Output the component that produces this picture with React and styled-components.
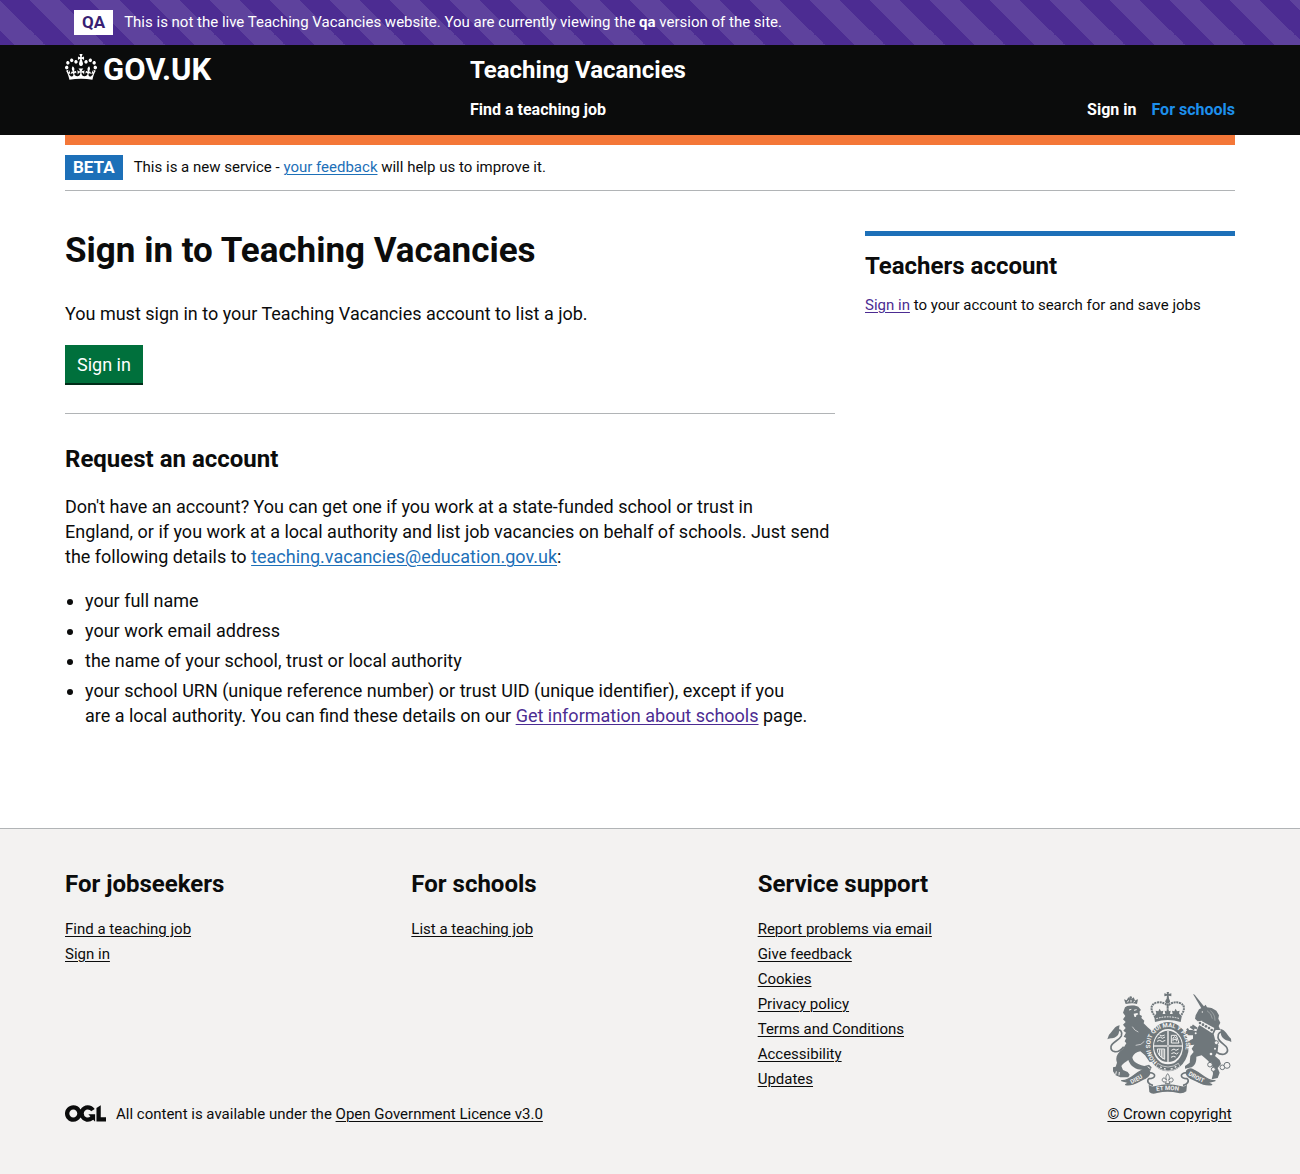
import React from 'react';
import styled, { createGlobalStyle } from 'styled-components';

const ink = '#0b0c0c';
const purple = '#4c2c92';
const blue = '#1d70b8';
const rule = '#b1b4b6';
const crestGrey = '#6f777b';
const paper = '#f3f2f1';

const GlobalStyle = createGlobalStyle`
  *, *::before, *::after { box-sizing: border-box; }
  body {
    margin: 0;
    background: #fff;
    color: ${ink};
    font-family: Roboto, "Liberation Sans", Arial, sans-serif;
    font-size: 18px;
    line-height: 25px;
  }
  h1, h2, p, ul { margin: 0; padding: 0; }
`;

const Container = styled.div`
  max-width: 1170px;
  margin: 0 auto;
  @media (max-width: 1230px) { margin: 0 30px; }
`;

const Link = styled.a`
  color: ${(p) => (p.$tone === 'visited' ? purple : p.$tone === 'plain' ? ink : blue)};
  text-decoration: underline;
  text-decoration-thickness: 1px;
  text-underline-offset: 2px;
  &:hover { text-decoration-thickness: 3px; }
`;

const Heading = styled.h2`
  font-size: 24px;
  line-height: 30px;
  font-weight: 700;
`;

const EnvironmentBar = styled.div`
  padding: 10px 0;
  background-color: ${purple};
  background-image: linear-gradient(
    45deg,
    rgba(255, 255, 255, 0.1) 25%,
    transparent 25%,
    transparent 50%,
    rgba(255, 255, 255, 0.1) 50%,
    rgba(255, 255, 255, 0.1) 75%,
    transparent 75%
  );
  background-position: 30px 0;
  background-size: 60px 60px;
  color: #fff;
`;

const Notice = styled.div`
  display: flex;
  align-items: center;
  gap: 11px;
  padding: 0 ${(p) => p.$inset || '0'};
  font-size: 15px;
`;

const Tag = styled.strong`
  flex: none;
  padding: 0 8px;
  background: ${(p) => (p.$inverse ? '#fff' : blue)};
  color: ${(p) => (p.$inverse ? '#381f73' : '#fff')};
  font-size: 17px;
  line-height: 25px;
`;

const Header = styled.header`
  background: ${ink};
  color: #fff;
`;

const HeaderGrid = styled.div`
  display: grid;
  grid-template-columns: 1fr 2fr;
  padding: 10px 0 13px;
`;

const HomeLink = styled.a`
  display: flex;
  align-items: center;
  align-self: start;
  gap: 6px;
  height: 30px;
  color: #fff;
  font-size: 31px;
  line-height: 30px;
  font-weight: 700;
  text-decoration: none;
`;

const CrownIcon = styled.svg`
  flex: none;
  width: 32px;
  height: 26px;
  margin-bottom: 6px;
  fill: currentColor;
`;

const HeaderContent = styled.div`
  padding-left: 15px;
`;

const ServiceName = styled.a`
  color: #fff;
  font-size: 24px;
  line-height: 30px;
  font-weight: 700;
  text-decoration: none;
`;

const HeaderNav = styled.nav`
  display: flex;
  gap: 15px;
  margin-top: 12px;
`;

const NavLink = styled.a`
  margin-right: ${(p) => (p.$first ? 'auto' : '0')};
  color: ${(p) => (p.$active ? '#1d8feb' : '#fff')};
  font-size: 16px;
  font-weight: 700;
  text-decoration: none;
`;

const PhaseBanner = styled.div`
  padding: 10px 0;
  border-top: 10px solid #f47738;
  border-bottom: 1px solid ${rule};
`;

const Columns = styled.div`
  display: grid;
  grid-template-columns: 2fr 1fr;
  margin: 0 -15px;
  padding: 40px 0 100px;
`;

const Main = styled.main`
  padding: 0 15px;
`;

const Title = styled.h1`
  margin-bottom: 30px;
  font-size: 35px;
  line-height: 40px;
`;

const Paragraph = styled.p`
  margin-bottom: 19px;
`;

const StartButton = styled.button`
  display: block;
  height: 38px;
  padding: 0 12px;
  border: 0;
  background: #00703c;
  box-shadow: 0 2px 0 #002d18;
  color: #fff;
  font: inherit;
  cursor: pointer;
`;

const Divider = styled.hr`
  margin: 30px 0;
  border: 0;
  border-top: 1px solid ${rule};
`;

const BulletList = styled.ul`
  display: grid;
  gap: 5px;
  padding-left: 20px;
`;

const SectionHeading = styled(Heading)`
  margin-bottom: 20px;
`;

const Aside = styled.aside`
  padding: 0 15px;
`;

const AccountPanel = styled.section`
  display: grid;
  gap: 12px;
  padding-top: 15px;
  border-top: 5px solid ${blue};
`;

const SmallText = styled.p`
  font-size: 15px;
`;

const Footer = styled.footer`
  padding: 40px 0 48px;
  border-top: 1px solid ${rule};
  background: ${paper};
  font-size: 15px;
`;

const FooterLayout = styled.div`
  display: flex;
  align-items: flex-end;
`;

const FooterMain = styled.div`
  flex: 1;
  display: grid;
  gap: 10px;
`;

const FooterNav = styled.nav`
  display: grid;
  grid-template-columns: repeat(3, 1fr);
`;

const LinkGroup = styled.div`
  display: grid;
  align-content: start;
  gap: 18px;
`;

const LinkList = styled.ul`
  list-style: none;
`;

const Licence = styled.div`
  display: flex;
  align-items: center;
  gap: 10px;
`;

const OglIcon = styled.svg`
  flex: none;
  width: 41px;
  height: 17px;
  margin-bottom: 3px;
`;

const Copyright = styled.a`
  display: grid;
  justify-items: center;
  gap: 8px;
  width: 131px;
  color: ${ink};
  text-underline-offset: 2px;
`;

const CrestIcon = styled.svg`
  width: 125px;
  height: 102px;
`;

function Crown() {
  return (
    <CrownIcon viewBox="0 0 132 97" preserveAspectRatio="none" aria-hidden="true">
      <path
        fillRule="evenodd"
        d="M25 30.2c3.5 1.5 7.7-.2 9.1-3.7 1.5-3.6-.2-7.8-3.9-9.2-3.6-1.4-7.6.3-9.1 3.9-1.4 3.5.3 7.5 3.9 9zM9 39.5c3.6 1.5 7.8-.2 9.2-3.7 1.5-3.6-.2-7.8-3.9-9.1-3.6-1.5-7.6.2-9.1 3.8-1.4 3.5.3 7.5 3.8 9zM4.4 57.2c3.5 1.5 7.7-.2 9.1-3.8 1.5-3.6-.2-7.7-3.9-9.1-3.5-1.5-7.6.3-9.1 3.8-1.4 3.5.3 7.6 3.9 9.1zm38.3-21.4c3.5 1.5 7.7-.2 9.1-3.8 1.5-3.6-.2-7.7-3.9-9.1-3.6-1.5-7.6.3-9.1 3.8-1.3 3.6.4 7.7 3.9 9.1zm64.4-5.6c-3.6 1.5-7.8-.2-9.1-3.7-1.5-3.6.2-7.8 3.8-9.2 3.6-1.4 7.7.3 9.2 3.9 1.3 3.5-.4 7.5-3.9 9zm15.9 9.3c-3.6 1.5-7.7-.2-9.1-3.7-1.5-3.6.2-7.8 3.7-9.1 3.6-1.5 7.7.2 9.2 3.8 1.5 3.5-.3 7.5-3.8 9zm4.7 17.7c-3.6 1.5-7.8-.2-9.2-3.8-1.5-3.6.2-7.7 3.9-9.1 3.6-1.5 7.7.3 9.2 3.8 1.3 3.5-.4 7.6-3.9 9.1zM89.3 35.8c-3.6 1.5-7.8-.2-9.2-3.8-1.4-3.6.2-7.7 3.9-9.1 3.6-1.5 7.7.3 9.2 3.8 1.4 3.6-.3 7.7-3.9 9.1zM69.7 17.7l8.9 4.7V9.3l-8.9 2.8c-.2-.3-.5-.6-.9-.9L72.4 0H59.6l3.5 11.2c-.3.3-.6.5-.9.9l-8.8-2.8v13.1l8.8-4.7c.3.3.6.7.9.9l-5 15.4v.1c-.2.8-.4 1.6-.4 2.4 0 4.1 3.1 7.5 7 8.1h.2c.3 0 .7.1 1 .1.4 0 .7 0 1-.1h.2c4-.6 7.1-4.1 7.1-8.1 0-.8-.1-1.7-.4-2.4V34l-5.1-15.4c.4-.2.7-.6 1-.9zM66 92.8c16.9 0 32.8 1.1 47.1 3.2 4-16.9 8.9-26.7 14-33.5l-9.6-3.4c1 4.9 1.1 7.2 0 10.2-1.5-1.4-3-4.3-4.2-8.7L108.6 76c2.8-2 5-3.2 7.5-3.3-4.4 9.4-10 11.9-13.6 11.2-4.3-.8-6.3-4.6-5.6-7.9 1-4.7 5.7-5.9 8-.5 4.3-8.7-3-11.4-7.6-8.8 7.1-7.2 7.9-13.5 2.1-21.1-8 6.1-8.1 12.3-4.5 20.8-4.7-5.4-12.1-2.5-9.5 6.2 3.4-5.2 7.9-2 7.2 3.1-.6 4.3-6.4 7.8-13.5 7.2-10.3-.9-10.9-8-11.2-13.8 2.5-.5 7.1 1.8 11 7.3L80.2 60c-4.1 4.4-8 5.3-12.3 5.4 1.4-4.4 8-11.6 8-11.6H55.5s6.4 7.2 7.9 11.6c-4.2-.1-8-1-12.3-5.4l1.4 16.4c3.9-5.5 8.5-7.7 10.9-7.3-.3 5.8-.9 12.8-11.1 13.8-7.2.6-12.9-2.9-13.5-7.2-.7-5 3.8-8.3 7.1-3.1 2.7-8.7-4.6-11.6-9.4-6.2 3.7-8.5 3.6-14.7-4.6-20.8-5.8 7.6-5 13.9 2.2 21.1-4.7-2.6-11.9.1-7.7 8.8 2.3-5.5 7.1-4.2 8.1.5.7 3.3-1.3 7.1-5.7 7.9-3.5.7-9-1.8-13.5-11.2 2.5.1 4.7 1.3 7.5 3.3l-4.7-15.4c-1.2 4.4-2.7 7.2-4.3 8.7-1.1-3-.9-5.3 0-10.2l-9.5 3.4c5 6.9 9.9 16.7 14 33.5 14.8-2.1 30.8-3.2 47.7-3.2z"
      />
    </CrownIcon>
  );
}

function Ogl() {
  return (
    <OglIcon viewBox="0 0 483.2 195.7" fill={ink} aria-hidden="true">
      <path d="M421.5 142.8V.1l-50.7 32.3v161.1h112.4v-50.7zm-122.3-9.6A47.12 47.12 0 0 1 221 97.8c0-26 21.1-47.1 47.1-47.1 16.7 0 31.4 8.7 39.7 21.8l42.7-27.2A97.63 97.63 0 0 0 268.1 0c-36.5 0-68.3 20.1-85.1 49.7A98 98 0 0 0 97.8 0C43.9 0 0 43.9 0 97.8s43.9 97.8 97.8 97.8c36.5 0 68.3-20.1 85.1-49.7a97.76 97.76 0 0 0 149.6 25.4l19.4 22.2h3v-87.8h-80l24.3 27.5zM97.8 145c-26 0-47.1-21.1-47.1-47.1s21.1-47.1 47.1-47.1 47.1 21.1 47.1 47.1S123.8 145 97.8 145" />
    </OglIcon>
  );
}

function Crest() {
  return (
    <CrestIcon viewBox="36 36 375 306" fill={crestGrey} aria-hidden="true">
      {/* lion */}
      <path d="M90 82 L98 77 L118 76 L130 80 L138 90 L134 94 L134 104 L141 108 L139 114 L148 122 L146 130 L158 142 L170 152 L168 168 L160 180 L164 190 L158 204 L160 216 L172 232 L180 244 L164 246 L150 226 L136 214 C124 216 116 222 112 232 C114 244 122 252 148 258 L162 254 L170 262 L166 272 L146 270 L128 268 C112 262 104 252 100 240 C92 246 84 250 79 258 L84 270 L98 276 L104 284 L100 292 L76 292 L62 286 L54 274 L54 262 L62 260 L66 248 C60 232 66 220 84 206 L94 190 L89 184 L94 174 L86 170 L93 158 L85 152 L92 144 L84 134 L92 126 L84 118 L91 108 L84 98 Z" />
      <path d="M86 200 C68 224 46 216 48 200 C50 186 72 182 79 168 C83 156 76 146 66 152" fill="none" stroke={crestGrey} strokeWidth="5" />
      <path d="M74 136 C58 138 54 154 42 164 L37 178 C48 172 54 178 66 168 C76 160 70 150 74 136Z" />
      <path d="M92 72 L87 58 L95 61 L100 52 L108 58 L116 52 L120 61 L129 58 L126 72 C114 68 104 70 92 72Z" />
      <circle cx="107" cy="53" r="4" />
      <path d="M91 77 Q108 70 127 76" stroke={paper} strokeWidth="2" fill="none" />
      <path d="M97 67 L101 61 M108 67 V60 M116 67 L120 62 M102 90 L109 88 M117 91 L125 89 M64 274 L62 284 M73 276 L72 286 M158 260 L166 266" stroke={paper} strokeWidth="3" fill="none" />
      <path d="M116 101 L127 99 L130 103 L124 106 L123 111 L118 110Z" fill={paper} />
      <path d="M122 196 Q140 196 148 184 M112 140 Q118 152 130 156" stroke={paper} strokeWidth="2" fill="none" />

      {/* unicorn */}
      <path d="M294 42 L299 44 L329 82 L320 86 Z" />
      <path d="M312 88 L324 82 L332 74 L336 82 L350 84 L364 92 L372 106 L370 116 L376 128 L371 138 L376 150 L362 150 L356 162 L360 178 L370 196 L368 214 L360 228 L374 240 L378 252 L368 264 L374 278 L368 294 L350 298 L354 282 L352 258 C344 246 334 238 320 226 L304 230 C304 242 304 252 290 262 L270 266 L270 258 L284 248 L286 228 L296 216 L290 206 L298 194 L284 196 L268 188 L264 176 L272 174 L282 182 L294 176 L294 166 L278 166 L268 158 L278 150 L292 150 L304 154 L310 140 L322 122 L308 124 L300 116 L302 106 Z" />
      <path d="M292 136 L306 146 M276 146 L284 158 M286 140 L298 148" stroke={crestGrey} strokeWidth="6" fill="none" />
      <path d="M308 132 L318 122 L358 144 L352 160 Z" fill={paper} />
      <circle cx="315" cy="129" r="4" />
      <circle cx="324" cy="134" r="4" />
      <circle cx="333" cy="139" r="4" />
      <circle cx="342" cy="144" r="4" />
      <circle cx="350" cy="150" r="4" />
      <path d="M364 216 C386 232 402 218 396 204 C390 192 370 186 369 172 C368 158 378 152 384 160" fill="none" stroke={crestGrey} strokeWidth="5" />
      <path d="M376 146 C392 150 396 164 408 176 L409 186 C400 180 394 184 384 174 C376 166 378 158 376 146Z" />
      <circle cx="322" cy="96" r="2" fill={paper} />
      <path d="M336 92 Q350 100 352 116 M346 92 Q360 102 360 122" stroke={paper} strokeWidth="1" fill="none" />
      <g fill={paper} stroke={crestGrey} strokeWidth="3">
        <circle cx="345" cy="254" r="7" />
        <circle cx="355" cy="268" r="6" />
        <circle cx="382" cy="262" r="7" />
        <circle cx="396" cy="256" r="9" />
        <circle cx="364" cy="188" r="6" />
      </g>
      <g fill={paper}>
        <circle cx="360" cy="206" r="3" />
        <circle cx="348" cy="222" r="4" />
        <circle cx="302" cy="160" r="3" />
      </g>

      {/* garter and quartered shield */}
      <ellipse cx="219" cy="200" rx="62" ry="74" />
      <ellipse cx="219" cy="200" rx="45" ry="53" fill={paper} />
      <ellipse cx="219" cy="199" rx="42" ry="47" />
      <path d="M219 152 V246 M177 198 H261" stroke={paper} strokeWidth="6" />
      <path d="M219 152 V246 M177 198 H261" stroke={crestGrey} strokeWidth="2" />
      <g fill="none" stroke={paper} strokeWidth="3">
        <path d="M188 175 l8 -4 6 4 8 -4 M186 184 l8 -3 8 4 9 -4 M194 165 l7 3 8 -3" />
        <path d="M229 166 H244 L252 189 H229Z M234 184 V174 l5 -4 5 6 v8 M235 178 h8" />
        <path d="M187 207 Q187 228 209 238 V207Z M194 208 V228 M199 208 V232 M204 208 V236" />
        <path d="M229 211 l8 -4 6 4 8 -4 M229 221 l8 -3 8 4 5 -4 M228 232 l7 -3 7 2" />
      </g>
      <path id="garter-line" d="M187 246 C160 224 158 176 184 154 C204 137 234 137 254 154 C280 176 278 224 251 246" fill="none" />
      <text fontFamily="Roboto, sans-serif" fontSize="18" fontWeight="700" fill={paper}>
        <textPath href="#garter-line">HONI SOIT QUI MAL Y PENSE</textPath>
      </text>
      <path d="M188 250 Q219 272 250 250 L255 260 Q219 286 183 260Z" stroke={paper} strokeWidth="2" />
      <path d="M196 260 l4 3 M207 266 l5 1 M227 267 l6 -1 M239 262 l5 -3" stroke={paper} strokeWidth="4" />

      {/* royal crown */}
      <path d="M215 36 H222 L221 42 L229 40 V49 L221 47 L223 62 H214 L216 47 L208 49 V40 L216 42Z" />
      <circle cx="218" cy="64" r="7" />
      <path d="M182 112 C166 92 164 74 184 68 C200 64 214 72 218 78 C222 72 238 64 252 68 C273 74 270 92 254 112" fill="none" stroke={crestGrey} strokeWidth="6" strokeDasharray="6 2" />
      <path d="M218 72 V98" stroke={crestGrey} strokeWidth="6" strokeDasharray="6 2" />
      <path d="M178 110 L184 100 L182 92 L190 94 L194 86 L198 94 L205 92 L203 102 L211 102 L209 92 L215 94 L218 86 L221 94 L227 92 L225 102 L233 102 L231 92 L238 94 L242 86 L246 94 L254 92 L252 100 L260 110 L257 126 Q218 114 180 126Z" />
      <path d="M184 116 Q218 105 254 116" stroke={paper} strokeWidth="3" strokeDasharray="5 3" fill="none" />

      {/* motto ribbon */}
      <g stroke={crestGrey} strokeWidth="4" strokeLinejoin="round">
        <path d="M80 302 C104 304 116 282 142 270 C154 264 164 268 164 278 C164 286 158 290 152 294 C134 300 116 320 92 314 L102 308Z" />
        <path d="M360 302 C334 304 322 282 296 270 C284 264 274 268 274 278 C274 286 280 290 286 294 C304 300 322 320 350 314 L338 308Z" />
      </g>
      <path d="M161 314 Q168 322 182 318 Q218 308 256 318 Q270 322 276 314 L274 334 Q264 342 250 339 Q218 332 186 339 Q170 344 163 336Z" />
      <path d="M164 278 C186 280 182 296 162 296 C154 302 160 314 174 316 M274 278 C252 280 256 296 276 296 C284 302 278 314 264 316" fill="none" stroke={crestGrey} strokeWidth="5" />
      <path id="ribbon-left" d="M107 313 Q134 301 158 284" fill="none" />
      <path id="ribbon-middle" d="M175 335 Q218 325 264 335" fill="none" />
      <path id="ribbon-right" d="M279 284 Q306 302 340 314" fill="none" />
      <g fontFamily="Roboto, sans-serif" fontSize="18" fontWeight="700" fill={paper}>
        <text><textPath href="#ribbon-left" startOffset="3">DIEU</textPath></text>
        <text><textPath href="#ribbon-middle" startOffset="10">ET MON</textPath></text>
        <text><textPath href="#ribbon-right">DROIT</textPath></text>
      </g>
      <path d="M218 281 C226 290 223 296 221 301 C226 291 236 292 234 302 C232 308 226 306 222 305 L225 311 H211 L214 305 C210 306 204 308 202 302 C200 292 210 291 215 301 C213 296 210 290 218 281Z" fill="none" stroke={crestGrey} strokeWidth="3" />
    </CrestIcon>
  );
}

const footerGroups = [
  { title: 'For jobseekers', links: ['Find a teaching job', 'Sign in'] },
  { title: 'For schools', links: ['List a teaching job'] },
  {
    title: 'Service support',
    links: ['Report problems via email', 'Give feedback', 'Cookies', 'Privacy policy', 'Terms and Conditions', 'Accessibility', 'Updates'],
  },
];

export default function App() {
  return (
    <>
      <GlobalStyle />
      <EnvironmentBar>
        <Container>
          <Notice $inset="9px">
            <Tag $inverse>QA</Tag>
            <span>
              This is not the live Teaching Vacancies website. You are currently viewing the <strong>qa</strong> version of the site.
            </span>
          </Notice>
        </Container>
      </EnvironmentBar>

      <Header>
        <Container>
          <HeaderGrid>
            <HomeLink href="#">
              <Crown />
              GOV.UK
            </HomeLink>
            <HeaderContent>
              <ServiceName href="#">Teaching Vacancies</ServiceName>
              <HeaderNav aria-label="Main">
                <NavLink href="#" $first>Find a teaching job</NavLink>
                <NavLink href="#">Sign in</NavLink>
                <NavLink href="#" $active>For schools</NavLink>
              </HeaderNav>
            </HeaderContent>
          </HeaderGrid>
        </Container>
      </Header>

      <Container>
        <PhaseBanner>
          <Notice>
            <Tag>BETA</Tag>
            <span>
              This is a new service - <Link href="#">your feedback</Link> will help us to improve it.
            </span>
          </Notice>
        </PhaseBanner>

        <Columns>
          <Main>
            <Title>Sign in to Teaching Vacancies</Title>
            <Paragraph>You must sign in to your Teaching Vacancies account to list a job.</Paragraph>
            <StartButton type="button">Sign in</StartButton>
            <Divider />
            <section>
              <SectionHeading>Request an account</SectionHeading>
              <Paragraph>
                Don't have an account? You can get one if you work at a state-funded school or trust in
                <br />
                England, or if you work at a local authority and list job vacancies on behalf of schools. Just send
                <br />
                the following details to <Link href="#">teaching.vacancies@education.gov.uk</Link>:
              </Paragraph>
              <BulletList>
                <li>your full name</li>
                <li>your work email address</li>
                <li>the name of your school, trust or local authority</li>
                <li>
                  your school URN (unique reference number) or trust UID (unique identifier), except if you
                  <br />
                  are a local authority. You can find these details on our{' '}
                  <Link href="#" $tone="visited">Get information about schools</Link> page.
                </li>
              </BulletList>
            </section>
          </Main>
          <Aside>
            <AccountPanel>
              <Heading>Teachers account</Heading>
              <SmallText>
                <Link href="#" $tone="visited">Sign in</Link> to your account to search for and save jobs
              </SmallText>
            </AccountPanel>
          </Aside>
        </Columns>
      </Container>

      <Footer>
        <Container>
          <FooterLayout>
            <FooterMain>
              <FooterNav aria-label="Footer">
                {footerGroups.map((group) => (
                  <LinkGroup key={group.title}>
                    <Heading>{group.title}</Heading>
                    <LinkList>
                      {group.links.map((label) => (
                        <li key={label}>
                          <Link href="#" $tone="plain">{label}</Link>
                        </li>
                      ))}
                    </LinkList>
                  </LinkGroup>
                ))}
              </FooterNav>
              <Licence>
                <Ogl />
                <span>
                  All content is available under the <Link href="#" $tone="plain">Open Government Licence v3.0</Link>
                </span>
              </Licence>
            </FooterMain>
            <Copyright href="#">
              <Crest />
              <span>© Crown copyright</span>
            </Copyright>
          </FooterLayout>
        </Container>
      </Footer>
    </>
  );
}
